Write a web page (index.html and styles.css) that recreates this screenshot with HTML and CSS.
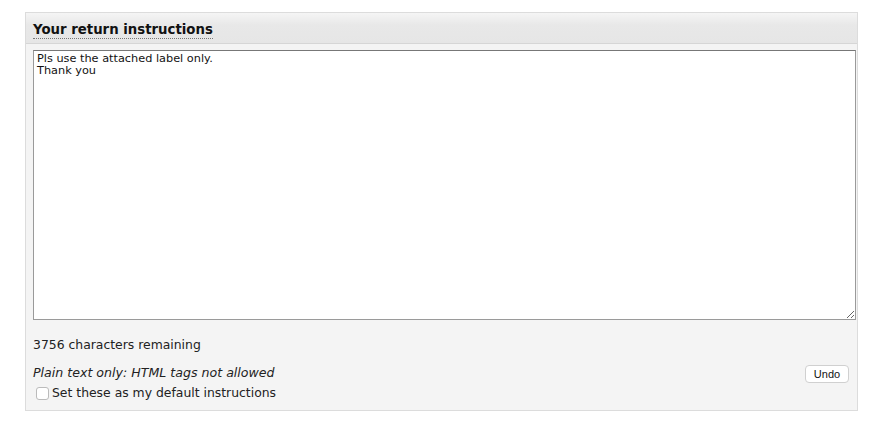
FILE: index.html
```html
<!DOCTYPE html>
<html lang="en">
<head>
  <meta charset="UTF-8">
  <title>Return instructions</title>
  <link rel="stylesheet" href="styles.css">
</head>
<body>
  <div class="panel">
    <div class="panel-head">
      <h3>Your return instructions</h3>
    </div>
    <div class="panel-body">
      <textarea class="instructions">Pls use the attached label only.
Thank you</textarea>
      <p class="remaining">3756 characters remaining</p>
      <div class="foot">
        <div class="foot-left">
          <p class="hint">Plain text only: HTML tags not allowed</p>
          <label class="default-check">
            <input type="checkbox">
            Set these as my default instructions
          </label>
        </div>
        <button class="undo">Undo</button>
      </div>
    </div>
  </div>
</body>
</html>
```

FILE: styles.css
```css
/* Base */
* { box-sizing: border-box; margin: 0; padding: 0; }
body {
  font-family: "DejaVu Sans", Verdana, sans-serif;
  background: #fff;
  color: #222;
}

/* Panel */
.panel {
  margin: 12px 0 0 25px;
  width: 833px;
  height: 399px;
  background: #f4f4f4;
  border: 1px solid #dcdcdc;
}
.panel-head {
  height: 31px;
  padding: 6px 0 0 7px;
  background: linear-gradient(#f5f5f5, #e8e8e8 40%, #e6e6e6);
  border-bottom: 1px solid #d6d6d6;
}
.panel-head h3 {
  display: inline-block;
  font-size: 13.3px;
  font-weight: bold;
  color: #111;
  line-height: 16px;
  border-bottom: 1px dotted #777;
}

/* Body */
.panel-body {
  padding: 6px 1px 0 7px;
}
.instructions {
  display: block;
  width: 823px;
  height: 270px;
  padding: 2px 3px;
  font-family: "DejaVu Sans", Verdana, sans-serif;
  font-size: 11.3px;
  line-height: 12px;
  color: #111;
  border: 1px solid #9a9a9a;
  border-top-color: #777;
  background: #fff;
  resize: both;
}
.remaining {
  margin-top: 17px;
  font-size: 12.4px;
  line-height: 16px;
}

/* Footer */
.foot {
  display: flex;
  justify-content: space-between;
  align-items: center;
  margin-top: 12px;
  padding-right: 7px;
}
.hint {
  font-size: 12.6px;
  font-style: italic;
  line-height: 16px;
}
.default-check {
  display: flex;
  align-items: center;
  gap: 3px;
  margin-top: 4px;
  font-size: 12.4px;
  line-height: 16px;
}
.default-check input {
  appearance: none;
  width: 13px;
  height: 13px;
  margin-left: 3px;
  border: 1px solid #bbb;
  border-radius: 3px;
  background: #fff;
}
.undo {
  align-self: flex-start;
  width: 44px;
  height: 18px;
  margin-top: 0;
  font-family: "Liberation Sans", Arial, sans-serif;
  font-size: 11px;
  color: #111;
  background: #fff;
  border: 1px solid #d0d0d0;
  border-radius: 4px;
}
```
